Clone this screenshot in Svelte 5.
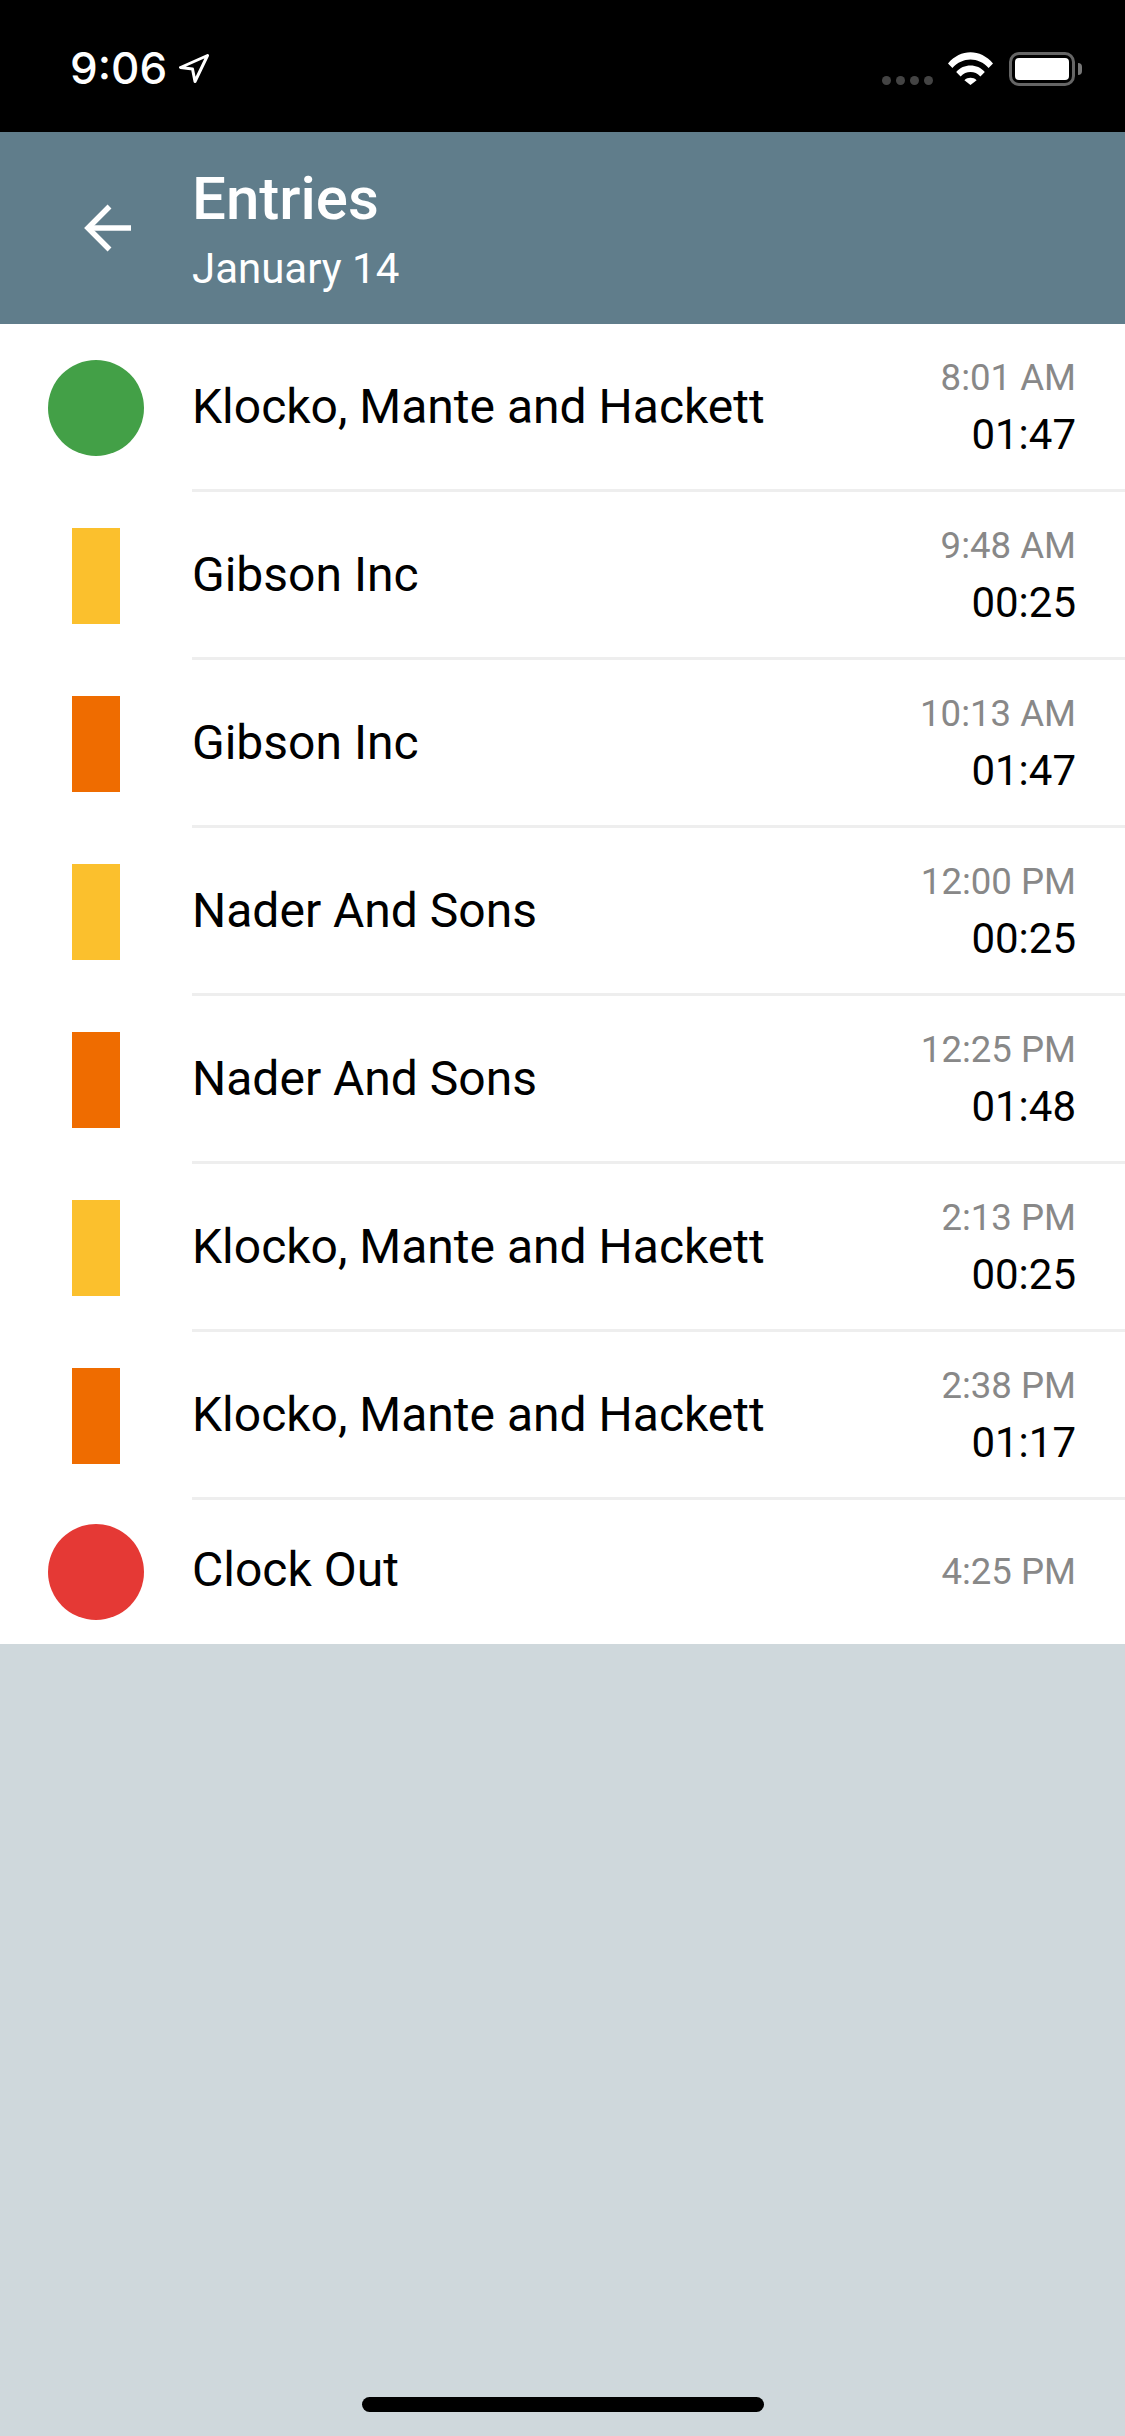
<script lang="ts">
	type Kind = 'start' | 'work' | 'break' | 'end';

	const entries: { kind: Kind; name: string; time: string; duration?: string }[] = [
		{ kind: 'start', name: 'Klocko, Mante and Hackett', time: '8:01 AM', duration: '01:47' },
		{ kind: 'break', name: 'Gibson Inc', time: '9:48 AM', duration: '00:25' },
		{ kind: 'work', name: 'Gibson Inc', time: '10:13 AM', duration: '01:47' },
		{ kind: 'break', name: 'Nader And Sons', time: '12:00 PM', duration: '00:25' },
		{ kind: 'work', name: 'Nader And Sons', time: '12:25 PM', duration: '01:48' },
		{ kind: 'break', name: 'Klocko, Mante and Hackett', time: '2:13 PM', duration: '00:25' },
		{ kind: 'work', name: 'Klocko, Mante and Hackett', time: '2:38 PM', duration: '01:17' },
		{ kind: 'end', name: 'Clock Out', time: '4:25 PM' }
	];
</script>

<div class="screen">
	<div class="status">
		<div class="status-left">
			<span class="clock">9:06</span>
			<svg class="loc" viewBox="0 0 30 29" width="30" height="29" fill="none" stroke="#fff" stroke-width="3" stroke-linejoin="round">
				<path d="M28.5 1.5 L1.5 13.5 L13.5 15 L16 27.5 Z" />
			</svg>
		</div>
		<div class="status-right">
			<div class="dots">
				<i></i><i></i><i></i><i></i>
			</div>
			<svg class="wifi" viewBox="0 0 45 33" width="45" height="33" fill="#fff">
				<path d="M0 11.5 C12.5 -3.5 32.5 -3.5 45 11.5 L40.6 16 C30.5 4.6 14.5 4.6 4.4 16 Z" />
				<path d="M8.2 20 C15.5 11.4 29.5 11.4 36.8 20 L32.4 24.4 C27 18.6 18 18.6 12.6 24.4 Z" />
				<path d="M16.4 28.2 C19.8 25 25.2 25 28.6 28.2 L22.5 33 Z" />
			</svg>
			<div class="battery">
				<div class="battery-body"><div class="battery-fill"></div></div>
				<div class="battery-nub"></div>
			</div>
		</div>
	</div>

	<header class="head">
		<button class="back" aria-label="Back">
			<svg viewBox="0 0 48 48" width="48" height="48" fill="none" stroke="#fff" stroke-width="5.5">
				<path d="M48 24 H4" />
				<path d="M26.5 2.5 L5 24 L26.5 45.5" />
			</svg>
		</button>
		<div>
			<h1 class="title">Entries</h1>
			<p class="subtitle">January 14</p>
		</div>
	</header>

	<ul class="list">
		{#each entries as entry}
			<li class="row {entry.kind}">
				<div class="mark-col">
					<span class="mark"></span>
				</div>
				<div class="body">
					<span class="name">{entry.name}</span>
					<div class="times">
						<span class="time">{entry.time}</span>
						{#if entry.duration}
							<span class="duration">{entry.duration}</span>
						{/if}
					</div>
				</div>
			</li>
		{/each}
	</ul>

	<div class="rest">
		<div class="home-bar"></div>
	</div>
</div>

<style>
	:global(body) {
		margin: 0;
		background: #cfd8dc;
	}

	.screen {
		display: flex;
		flex-direction: column;
		height: 2436px;
		font-family: Roboto, 'Noto Sans', sans-serif;
		color: #000;
	}

	.status {
		flex: none;
		height: 132px;
		background: #000;
		display: flex;
		justify-content: space-between;
		box-sizing: border-box;
		padding: 0 43px 0 70px;
	}
	.status-left {
		display: flex;
		align-items: flex-start;
		gap: 12px;
		padding-top: 43px;
	}
	.clock {
		font: 500 44px/50px Inter, 'Liberation Sans', sans-serif;
		color: #fff;
	}
	.loc {
		margin-top: 11px;
	}
	.status-right {
		display: flex;
		align-items: flex-start;
		padding-top: 52px;
	}
	.dots {
		display: flex;
		gap: 5px;
		margin: 24px 15px 0 0;
	}
	.dots i {
		width: 9px;
		height: 9px;
		border-radius: 50%;
		background: #444;
	}
	.battery {
		display: flex;
		align-items: center;
		gap: 3px;
		margin-left: 16px;
	}
	.battery-body {
		width: 66px;
		height: 34px;
		box-sizing: border-box;
		border: 3px solid #666;
		border-radius: 10px;
		padding: 3px;
	}
	.battery-fill {
		height: 100%;
		background: #fff;
		border-radius: 4px;
	}
	.battery-nub {
		width: 4px;
		height: 12px;
		background: #777;
		border-radius: 0 6px 6px 0;
	}

	.head {
		flex: none;
		height: 192px;
		box-sizing: border-box;
		padding-top: 4px;
		background: #607d8b;
		display: flex;
		align-items: center;
		color: #fff;
	}
	.back {
		width: 192px;
		padding: 0 0 0 83px;
		margin-top: -5px;
		border: 0;
		background: none;
		display: flex;
	}
	.title {
		font-size: 60px;
		font-weight: 500;
		line-height: 68px;
		margin: 0;
	}
	.subtitle {
		font-size: 42px;
		line-height: 54px;
		margin: 9px 0 0;
	}

	.list {
		list-style: none;
		margin: 0;
		padding: 0;
		background: #fff;
	}
	.row {
		display: flex;
	}
	.mark-col {
		flex: none;
		width: 192px;
		box-sizing: border-box;
		padding: 36px 0 0 48px;
	}
	.mark {
		display: block;
		width: 96px;
		height: 96px;
	}
	.start .mark {
		background: #43a047;
		border-radius: 50%;
	}
	.end .mark {
		background: #e53935;
		border-radius: 50%;
	}
	.end .mark-col {
		padding-top: 24px;
	}
	.break .mark,
	.work .mark {
		width: 48px;
		margin-left: 24px;
	}
	.break .mark {
		background: #fbc02d;
	}
	.work .mark {
		background: #ef6c00;
	}

	.body {
		flex: 1;
		height: 168px;
		box-sizing: border-box;
		border-bottom: 3px solid #eeeeee;
		padding-right: 49px;
		display: flex;
		align-items: center;
		justify-content: space-between;
	}
	.end .body {
		height: 144px;
		border-bottom: 0;
	}
	.name {
		font-size: 48px;
	}
	.end .name {
		padding-bottom: 6px;
	}
	.times {
		display: flex;
		flex-direction: column;
		align-items: flex-end;
		padding-top: 3px;
	}
	.end .times {
		padding-top: 0;
	}
	.time {
		font-size: 36.6px;
		line-height: 54px;
		color: #888;
	}
	.duration {
		font-size: 42px;
		line-height: 60px;
	}

	.rest {
		flex: 1;
		background: #cfd8dc;
		display: flex;
		align-items: flex-end;
		justify-content: center;
		padding-bottom: 24px;
	}
	.home-bar {
		width: 402px;
		height: 15px;
		background: #000;
		border-radius: 8px;
	}
</style>
